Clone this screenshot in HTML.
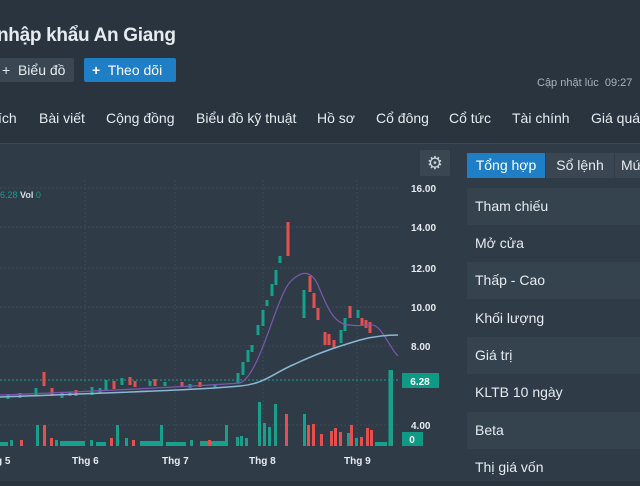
<!DOCTYPE html>
<html><head><meta charset="utf-8"><style>
body{margin:0;width:640px;height:480px;overflow:hidden;background:#29343f;font-family:"Liberation Sans","Noto Sans CJK SC",sans-serif;color:#e6ebef;position:relative}
.a{position:absolute;white-space:nowrap}
.t{font-size:19px;font-weight:bold;left:-3px;top:25px;letter-spacing:-0.3px}
.btn{top:58px;height:24px;border-radius:2px;font-size:14px;line-height:24px}
.nav{top:110px;font-size:14px;color:#e6ebef}
.row{position:absolute;left:467px;width:180px;height:37px;font-size:14px;line-height:37px;padding-left:8px;box-sizing:border-box}
</style></head><body>
<div class="a t">nhập khẩu An Giang</div>
<div class="a btn" style="left:-4px;width:78px;background:#3a4753;padding-left:6px;box-sizing:border-box">+&nbsp; Biểu đồ</div>
<div class="a btn" style="left:84px;width:92px;background:#1e7fc6;color:#fff;padding-left:8px;box-sizing:border-box"><b>+</b>&nbsp; Theo dõi</div>
<div class="a" style="left:537px;top:77px;font-size:11px;color:#aab3bb">Cập nhật lúc&nbsp; 09:27</div>
<div class="a nav" style="left:-2px">ích</div>
<div class="a nav" style="left:39px">Bài viết</div>
<div class="a nav" style="left:106px">Cộng đồng</div>
<div class="a nav" style="left:196px">Biểu đồ kỹ thuật</div>
<div class="a nav" style="left:317px">Hồ sơ</div>
<div class="a nav" style="left:376px">Cổ đông</div>
<div class="a nav" style="left:449px">Cổ tức</div>
<div class="a nav" style="left:512px">Tài chính</div>
<div class="a nav" style="left:591px">Giá quá</div>
<div class="a" style="left:0;top:143px;width:455px;height:337px;background:#2f3c48;border-top:1px solid #3b4854"></div>
<div class="a" style="left:455px;top:143px;width:185px;height:337px;background:#2f3c48;border-top:1px solid #3b4854"></div>
<svg class="a" style="left:0;top:143px" width="455" height="337" viewBox="0 143 455 337">
<g stroke="#3d4a56" stroke-dasharray="2 2" stroke-width="1">
<line x1="0" y1="188" x2="400" y2="188"/><line x1="0" y1="227" x2="400" y2="227"/><line x1="0" y1="268" x2="400" y2="268"/><line x1="0" y1="307" x2="400" y2="307"/><line x1="0" y1="346" x2="400" y2="346"/><line x1="0" y1="425" x2="400" y2="425"/>
<line x1="85" y1="180" x2="85" y2="446"/><line x1="175" y1="180" x2="175" y2="446"/><line x1="263" y1="180" x2="263" y2="446"/><line x1="357" y1="180" x2="357" y2="446"/>
</g>
<rect x="420" y="150" width="30" height="26" rx="2" fill="#3a4753"/>
<text x="435" y="169" font-size="18" fill="#c9d0d6" text-anchor="middle">⚙</text>
<text x="0" y="198" font-size="9" fill="#1a9c8a">6.28 <tspan fill="#d8dee3" font-weight="bold">Vol</tspan> 0</text>
<g font-size="10" fill="#e6ebef" font-weight="bold">
<text x="411" y="192">16.00</text><text x="411" y="231">14.00</text><text x="411" y="272">12.00</text><text x="411" y="311">10.00</text><text x="411" y="350">8.00</text><text x="411" y="429">4.00</text>
<text x="-4" y="464">g 5</text><text x="72" y="464">Thg 6</text><text x="162" y="464">Thg 7</text><text x="249" y="464">Thg 8</text><text x="344" y="464">Thg 9</text>
</g>
<line x1="0" y1="380" x2="400" y2="380" stroke="#1aa08e" stroke-dasharray="2 2"/>
<rect x="402" y="373" width="37" height="15" fill="#0f9a85"/><text x="420" y="385" font-size="10" fill="#fff" font-weight="bold" text-anchor="middle">6.28</text>
<rect x="402" y="432" width="21" height="14" fill="#0f9a85"/><text x="412" y="443" font-size="10" fill="#fff" font-weight="bold" text-anchor="middle">0</text>
<g fill="#19a08c">
<rect x="36" y="425" width="3" height="21"/><rect x="116" y="425" width="3" height="21"/><rect x="160" y="425" width="3" height="21"/><rect x="225" y="425" width="3" height="21"/><rect x="236" y="437" width="3" height="9"/>
<rect x="258" y="402" width="3" height="44"/><rect x="263" y="423" width="3" height="23"/><rect x="268" y="427" width="3" height="19"/><rect x="274" y="404" width="3" height="42"/><rect x="303" y="414" width="3" height="32"/><rect x="320" y="437" width="3" height="9"/><rect x="347" y="433" width="3" height="13"/><rect x="390" y="370" width="3" height="76"/>
<rect x="10" y="440" width="3" height="6"/><rect x="55" y="440" width="3" height="6"/><rect x="90" y="440" width="3" height="6"/><rect x="125" y="438" width="3" height="8"/><rect x="190" y="440" width="3" height="6"/><rect x="240" y="436" width="3" height="10"/><rect x="245" y="438" width="3" height="8"/><rect x="355" y="438" width="3" height="8"/><rect x="375" y="442" width="12" height="4"/><rect x="140" y="441" width="20" height="5"/><rect x="200" y="441" width="25" height="5"/><rect x="60" y="441" width="25" height="5"/><rect x="0" y="442" width="8" height="4"/><rect x="96" y="442" width="10" height="4"/><rect x="166" y="442" width="20" height="4"/>
</g>
<g fill="#e5504f">
<rect x="43" y="425" width="3" height="21"/><rect x="285" y="414" width="3" height="32"/><rect x="307" y="425" width="3" height="21"/><rect x="312" y="424" width="3" height="22"/><rect x="330" y="431" width="3" height="15"/><rect x="334" y="428" width="3" height="18"/><rect x="350" y="425" width="3" height="21"/><rect x="366" y="428" width="3" height="18"/><rect x="370" y="430" width="3" height="16"/>
<rect x="20" y="440" width="3" height="6"/><rect x="50" y="438" width="3" height="8"/><rect x="110" y="438" width="3" height="8"/><rect x="132" y="440" width="3" height="6"/><rect x="208" y="440" width="3" height="6"/><rect x="320" y="434" width="3" height="12"/><rect x="339" y="432" width="3" height="14"/><rect x="360" y="437" width="3" height="9"/>
</g>
<g stroke-width="3">
<g stroke="#19a08c"><line x1="8" y1="394" x2="8" y2="399"/><line x1="20" y1="393" x2="20" y2="398"/><line x1="36" y1="388" x2="36" y2="395"/><line x1="62" y1="392" x2="62" y2="398"/><line x1="70" y1="392" x2="70" y2="396"/><line x1="92" y1="387" x2="92" y2="395"/><line x1="100" y1="388" x2="100" y2="393"/><line x1="106" y1="380" x2="106" y2="390"/><line x1="122" y1="378" x2="122" y2="385"/><line x1="150" y1="381" x2="150" y2="386"/><line x1="165" y1="382" x2="165" y2="386"/><line x1="190" y1="384" x2="190" y2="388"/><line x1="215" y1="384" x2="215" y2="388"/><line x1="238" y1="373" x2="238" y2="383"/><line x1="243" y1="362" x2="243" y2="375"/><line x1="248" y1="350" x2="248" y2="362"/><line x1="252" y1="345" x2="252" y2="352"/><line x1="258" y1="325" x2="258" y2="335"/><line x1="263" y1="310" x2="263" y2="326"/><line x1="267" y1="300" x2="267" y2="306"/><line x1="272" y1="284" x2="272" y2="296"/><line x1="276" y1="270" x2="276" y2="285"/><line x1="280" y1="256" x2="280" y2="263"/><line x1="304" y1="290" x2="304" y2="318"/><line x1="341" y1="330" x2="341" y2="343"/><line x1="345" y1="318" x2="345" y2="331"/><line x1="358" y1="310" x2="358" y2="318"/><line x1="390" y1="370" x2="390" y2="446"/></g>
<g stroke="#e5504f"><line x1="44" y1="372" x2="44" y2="386"/><line x1="52" y1="388" x2="52" y2="396"/><line x1="76" y1="390" x2="76" y2="396"/><line x1="114" y1="381" x2="114" y2="389"/><line x1="130" y1="377" x2="130" y2="385"/><line x1="135" y1="381" x2="135" y2="387"/><line x1="155" y1="379" x2="155" y2="386"/><line x1="182" y1="382" x2="182" y2="387"/><line x1="200" y1="382" x2="200" y2="387"/><line x1="288" y1="222" x2="288" y2="256"/><line x1="310" y1="276" x2="310" y2="292"/><line x1="314" y1="293" x2="314" y2="308"/><line x1="318" y1="308" x2="318" y2="320"/><line x1="325" y1="332" x2="325" y2="345"/><line x1="329" y1="334" x2="329" y2="345"/><line x1="334" y1="340" x2="334" y2="348"/><line x1="350" y1="306" x2="350" y2="318"/><line x1="362" y1="318" x2="362" y2="325"/><line x1="366" y1="320" x2="366" y2="328"/><line x1="370" y1="322" x2="370" y2="333"/></g>
</g>
<path fill="none" stroke="#7a58b0" stroke-width="1.2" d="M0,395 C80,392 200,386 240,383 C260,375 275,300 290,282 C300,272 310,268 318,285 C328,310 335,325 350,325 C365,328 372,320 380,330 C388,340 392,350 398,356"/>
<path fill="none" stroke="#8ab8d4" stroke-width="1.5" d="M0,397 C100,393 200,390 240,386 C265,384 275,372 295,364 C320,352 340,346 360,340 C375,336 390,335 398,335"/>
</svg>
<div class="a" style="left:467px;top:153px;width:78px;height:25px;background:#1e7fc6;color:#fff;font-size:14px;line-height:25px;text-align:center">Tổng hợp</div>
<div class="a" style="left:546px;top:153px;width:68px;height:25px;background:#3a4753;font-size:14px;line-height:25px;text-align:center">Sổ lệnh</div>
<div class="a" style="left:615px;top:153px;width:40px;height:25px;background:#3a4753;font-size:14px;line-height:25px;padding-left:6px;box-sizing:border-box">Mứ</div>
<div class="row" style="top:188px;background:#35434f">Tham chiếu</div>
<div class="row" style="top:225px">Mở cửa</div>
<div class="row" style="top:262px;background:#35434f">Thấp - Cao</div>
<div class="row" style="top:300px">Khối lượng</div>
<div class="row" style="top:337px;background:#35434f">Giá trị</div>
<div class="row" style="top:374px">KLTB 10 ngày</div>
<div class="row" style="top:412px;background:#35434f">Beta</div>
<div class="row" style="top:449px">Thị giá vốn</div>
</body></html>
